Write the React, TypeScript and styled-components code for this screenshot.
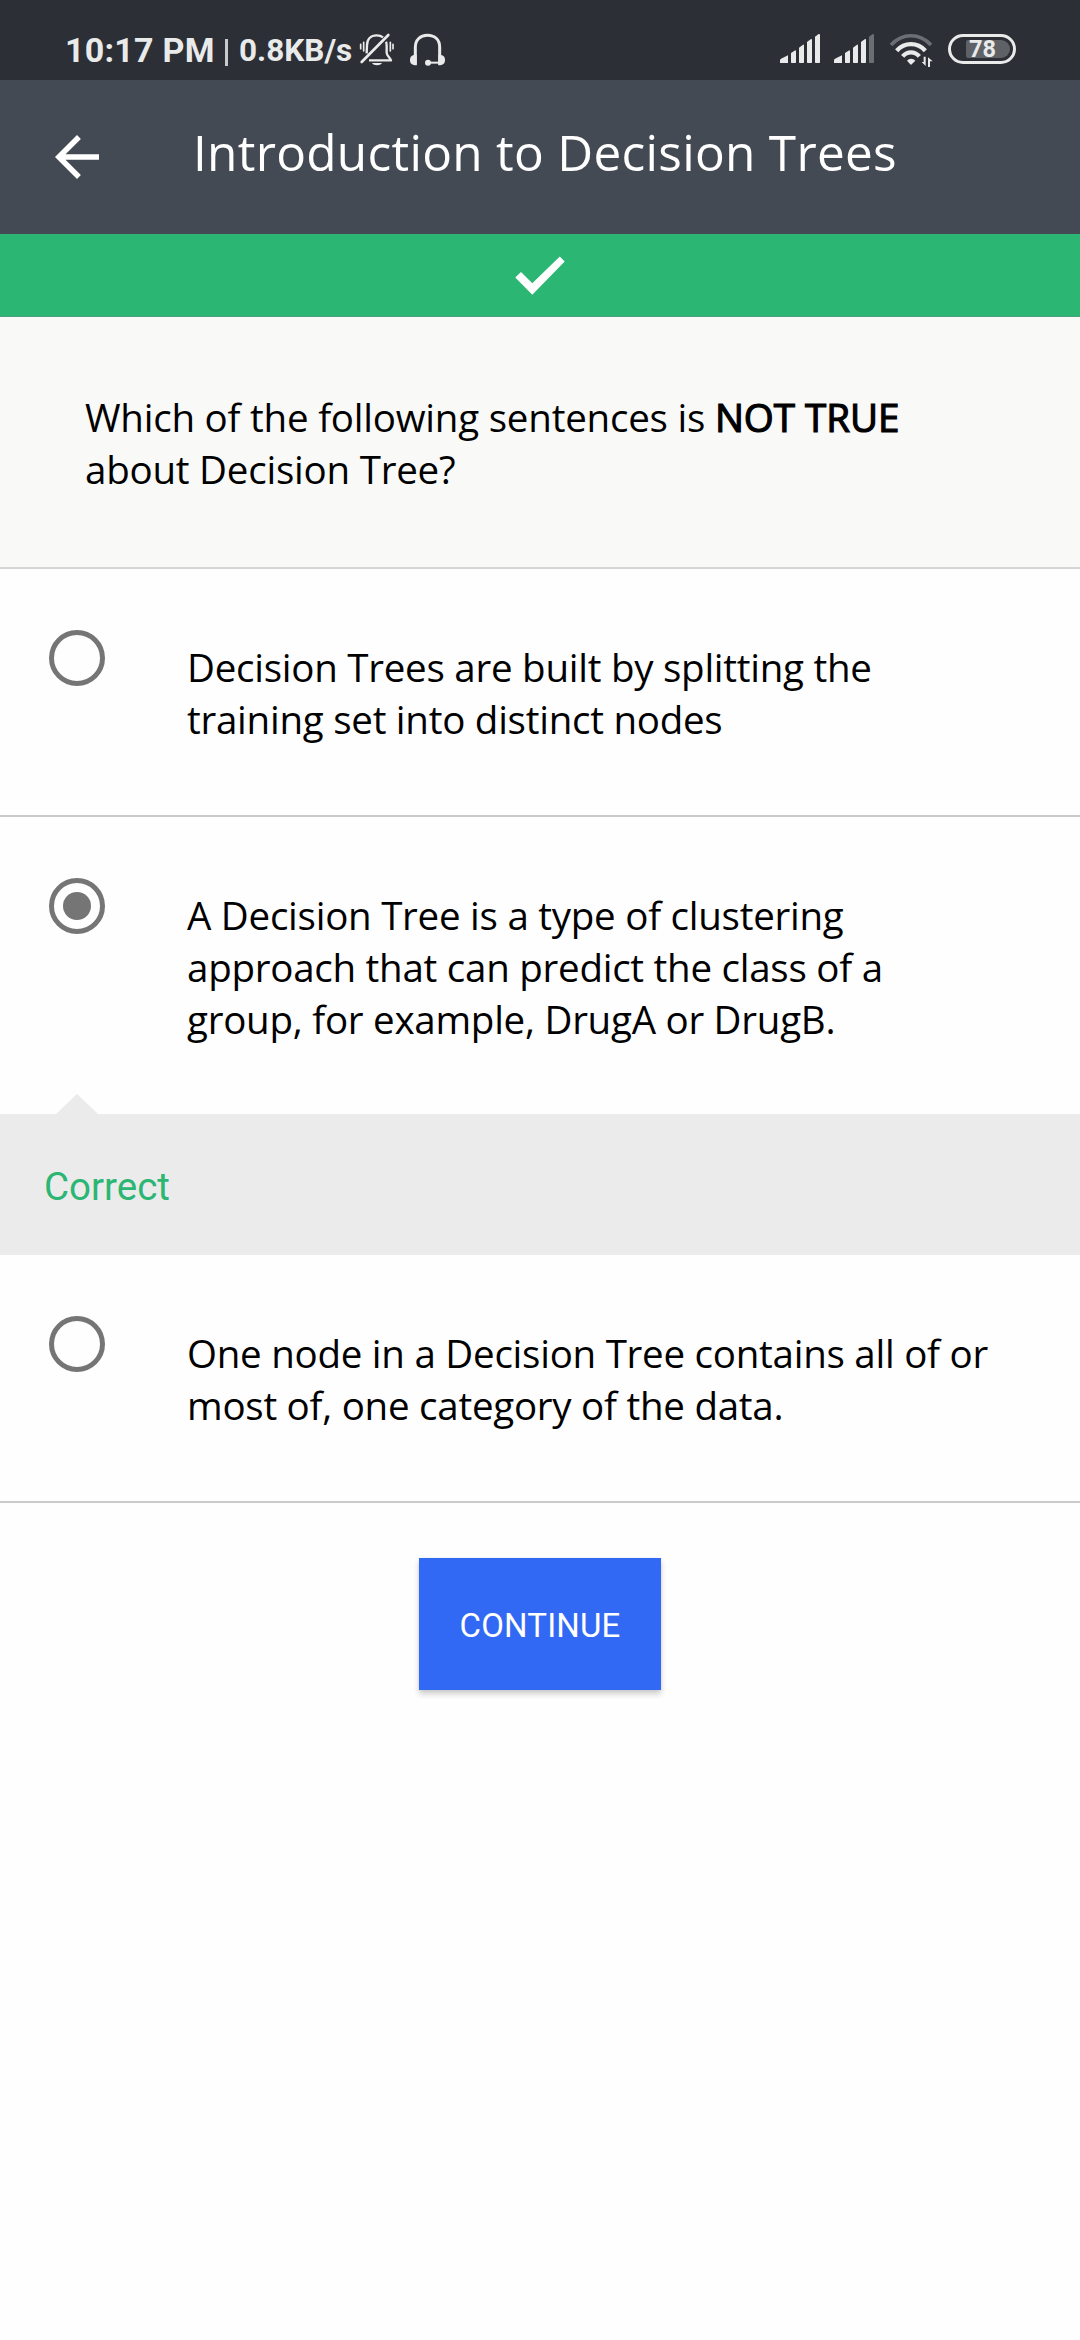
import React, { useState } from "react";
import styled, { createGlobalStyle } from "styled-components";

const GlobalStyle = createGlobalStyle`
  *, *::before, *::after { box-sizing: border-box; }
  body { margin: 0; background: #fefefe; }
`;

const Screen = styled.div`
  width: 1080px;
  min-height: 2340px;
  display: flex;
  flex-direction: column;
  background: #fefefe;
  font-family: "Open Sans", "Noto Sans", sans-serif;
  color: #000;
`;

const StatusBar = styled.header`
  height: 80px;
  padding: 32px 63px 0 65px;
  display: flex;
  justify-content: space-between;
  align-items: flex-start;
  background: #2c2f36;
  color: #e9eaea;
  font-family: Roboto, sans-serif;
`;

const StatusGroup = styled.div`
  display: flex;
  align-items: flex-start;
  height: 36px;
`;

const Clock = styled.span`
  width: 156px;
  font-size: 34px;
  font-weight: 700;
  line-height: 36px;
  letter-spacing: 0.25px;
  white-space: pre;
`;

const Divider = styled.span`
  width: 3px;
  height: 27px;
  margin: 7px 11px 0 4px;
  background: #c9cacc;
`;

const NetSpeed = styled.span`
  width: 119px;
  font-size: 31.5px;
  font-weight: 700;
  line-height: 38px;
  white-space: pre;
`;

const StatusIcon = styled.svg<{ $w: number; $gap?: number }>`
  display: block;
  flex: none;
  width: ${(p) => p.$w}px;
  height: 36px;
  margin-right: ${(p) => p.$gap ?? 0}px;
`;

const Battery = styled.div`
  display: grid;
  width: 68px;
  height: 30px;
  margin: 2px 1px 0 1px;
  border: 3.5px solid #e9eaea;
  border-radius: 15px;
  place-items: center;
  font-size: 23.5px;
  font-weight: 700;
  line-height: 24px;
`;

const BatteryFill = styled.span`
  grid-area: 1 / 1;
  justify-self: end;
  width: 44px;
  height: 18px;
  margin-right: 3px;
  border-radius: 2px 9px 9px 2px;
  background: #5e6165;
`;

const BatteryLevel = styled.span`
  grid-area: 1 / 1;
  padding-left: 1px;
`;

const Toolbar = styled.nav`
  height: 154px;
  display: flex;
  align-items: center;
  padding-left: 44px;
  background: #444a54;
  color: #fff;
`;

const BackButton = styled.button`
  padding: 0;
  border: 0;
  background: none;
  color: inherit;
  display: block;
  width: 66px;
  height: 66px;
  svg { display: block; }
`;

const Title = styled.h1`
  margin: 0 0 11px 83px;
  font-size: 49.5px;
  font-weight: 400;
  line-height: 68px;
  letter-spacing: 0.29px;
  white-space: nowrap;
`;

const ResultBanner = styled.div`
  height: 83px;
  display: flex;
  justify-content: center;
  align-items: center;
  background: #2bb673;
  border-bottom: 1px solid #4fa07c;
`;

const Question = styled.section`
  height: 252px;
  padding: 74px 84px 0 85px;
  background: #f9f9f7;
  border-bottom: 2px solid #d5d5d5;
  font-size: 38.5px;
  line-height: 52px;
  letter-spacing: -0.22px;
`;

const Emphasis = styled.strong`
  font-weight: 400;
  letter-spacing: 0;
  -webkit-text-stroke: 1.2px #000;
`;

const Option = styled.label<{ $divided: boolean }>`
  display: flex;
  align-items: flex-start;
  padding: 0 80px ${(p) => (p.$divided ? 70 : 69)}px 49px;
  border-bottom: ${(p) => (p.$divided ? "2px solid #cacaca" : "0")};
`;

const RadioInput = styled.input`
  appearance: none;
  flex: none;
  width: 56px;
  height: 56px;
  margin: 61px 82px 0 0;
  border: 5.5px solid #757575;
  border-radius: 50%;
  display: grid;
  place-items: center;
  &:checked::before {
    content: "";
    width: 28px;
    height: 28px;
    border-radius: 50%;
    background: #757575;
  }
`;

const OptionText = styled.span`
  padding-top: 72px;
  font-size: 38.5px;
  line-height: 52px;
  letter-spacing: -0.25px;
  white-space: pre;
`;

const Feedback = styled.div`
  position: relative;
  height: 141px;
  padding-left: 44px;
  display: flex;
  align-items: center;
  background: #ebebeb;
  color: #2bb673;
  font-family: Roboto, sans-serif;
  font-size: 38.5px;
  line-height: 46px;
  padding-top: 4px;
  &::before {
    content: "";
    position: absolute;
    left: 56px;
    top: -20px;
    border: 21px solid transparent;
    border-top: 0;
    border-bottom: 20px solid #ebebeb;
  }
`;

const Actions = styled.footer`
  display: flex;
  justify-content: center;
  padding-top: 55px;
`;

const ContinueButton = styled.button`
  width: 242px;
  height: 132px;
  padding: 3px 0 0;
  border: 0;
  background: #3169f5;
  color: #fff;
  font-family: Roboto, sans-serif;
  font-size: 33px;
  line-height: 40px;
  letter-spacing: 0.15px;
  box-shadow: 0 4px 6px rgba(0, 0, 0, 0.2), 0 0 3px rgba(0, 0, 0, 0.06);
`;

const ink = "#e9eaea";
const dim = "#6b6e73";

const MutedBell = () => (
  <StatusIcon $w={38} $gap={12} viewBox="951 66 114 108" fill="none" stroke={ink} strokeWidth="7">
    <path d="M962 156 L1042 75" strokeWidth="8" strokeLinecap="round" />
    <path d="M977 130 L978 106 C978 87 989 76 1007 76 C1015 76 1021 78 1026 82" />
    <path d="M1035 95 C1037 99 1037 103 1037 108 L1037 128 C1037 137 1047 143 1050 151 L984 151" strokeLinejoin="round" />
    <path d="M993 159 H1023 C1018 168 998 168 993 159 Z" fill={ink} stroke="none" />
    <path d="M959 103 V116 M968 97 V123 M1048 97 V123 M1056 103 V116" strokeWidth="5" strokeLinecap="round" />
  </StatusIcon>
);

const Headset = () => (
  <StatusIcon $w={38} viewBox="1101 66 114 108" fill="none" stroke={ink} strokeWidth="9">
    <path d="M1123 164 V112 C1123 89 1138 76 1159 76 C1181 76 1196 89 1196 112 V164" />
    <path d="M1127 166 C1113 166 1107 161 1107 150 C1107 139 1113 134 1127 134 Z" fill={ink} stroke="none" />
    <path d="M1192 134 C1206 134 1212 139 1212 150 C1212 161 1206 166 1192 166 Z" fill={ink} stroke="none" />
    <path d="M1162 158 H1196" strokeWidth="6" />
    <circle cx="1161" cy="158" r="9" fill={ink} stroke="none" />
  </StatusIcon>
);

const SIGNAL_BARS = [
  "M60 159 V151 Q60 148 63 146 L84 136 V159 Z",
  "M93 157 V129 L106 121 Q108 121 108 124 V157 Q108 159 106 159 H95 Q93 159 93 157 Z",
  "M117 157 V113 L129 104 Q132 103 132 107 V157 Q132 159 130 159 H119 Q117 159 117 157 Z",
  "M141 157 V96 L153 87 Q156 86 156 90 V157 Q156 159 154 159 H143 Q141 159 141 157 Z",
  "M165 157 V80 L176 72 Q180 71 180 75 V157 Q180 159 178 159 H167 Q165 159 165 157 Z",
];

const Signal = ({ level, gap }: { level: number; gap: number }) => (
  <StatusIcon $w={42} $gap={gap} viewBox="57 66 126 108">
    {SIGNAL_BARS.map((d, i) => (
      <path key={i} d={d} fill={i < level ? ink : dim} />
    ))}
  </StatusIcon>
);

const Wifi = () => (
  <StatusIcon $w={45} $gap={13} viewBox="387 66 135 108" fill="none" stroke={ink} strokeWidth="11">
    <path d="M393 105 C427 68 479 68 513 105" stroke={dim} />
    <path d="M410 122 C434 96 472 96 496 122" strokeWidth="13" />
    <path d="M428 139 C442 123 464 123 478 139" strokeWidth="13" />
    <path d="M441 152 C447 144 460 144 466 152 L456 162 Q453 166 450 162 Z" fill={ink} stroke="none" />
    <path d="M497 140 V168 L485 156 H491 V140 Z M504 171 V142 L518 154 H510 V171 Z" fill={ink} stroke="none" />
  </StatusIcon>
);

const OPTIONS = [
  { text: "Decision Trees are built by splitting the\ntraining set into distinct nodes" },
  {
    text: "A Decision Tree is a type of clustering\napproach that can predict the class of a\ngroup, for example, DrugA or DrugB.",
    feedback: "Correct",
  },
  { text: "One node in a Decision Tree contains all of or\nmost of, one category of the data." },
];

export default function App() {
  const [selected, setSelected] = useState(1);

  return (
    <Screen>
      <GlobalStyle />
      <StatusBar>
        <StatusGroup>
          <Clock>10:17 PM</Clock>
          <Divider />
          <NetSpeed>0.8KB/s</NetSpeed>
          <MutedBell />
          <Headset />
        </StatusGroup>
        <StatusGroup>
          <Signal level={5} gap={12} />
          <Signal level={4} gap={14} />
          <Wifi />
          <Battery>
            <BatteryFill />
            <BatteryLevel>78</BatteryLevel>
          </Battery>
        </StatusGroup>
      </StatusBar>

      <Toolbar>
        <BackButton aria-label="Back">
          <svg width="66" height="66" viewBox="0 0 24 24" fill="currentColor">
            <path d="M20 11H7.83l5.59-5.59L12 4l-8 8 8 8 1.41-1.41L7.83 13H20v-2z" />
          </svg>
        </BackButton>
        <Title>Introduction to Decision Trees</Title>
      </Toolbar>

      <ResultBanner>
        <svg width="50" height="39" viewBox="0 0 50 39" fill="#fff">
          <path d="M0.3 21.5 L6 16 L17.3 27.2 L44.8 0.5 L49.7 5.6 L17.3 38.7 Z" />
        </svg>
      </ResultBanner>

      <Question>
        Which of the following sentences is <Emphasis>NOT TRUE</Emphasis>
        <br />
        about Decision Tree?
      </Question>

      {OPTIONS.map((option, i) => (
        <React.Fragment key={i}>
          <Option $divided={!option.feedback}>
            <RadioInput
              type="radio"
              name="answer"
              checked={selected === i}
              onChange={() => setSelected(i)}
            />
            <OptionText>{option.text}</OptionText>
          </Option>
          {option.feedback && <Feedback>{option.feedback}</Feedback>}
        </React.Fragment>
      ))}

      <Actions>
        <ContinueButton>CONTINUE</ContinueButton>
      </Actions>
    </Screen>
  );
}
